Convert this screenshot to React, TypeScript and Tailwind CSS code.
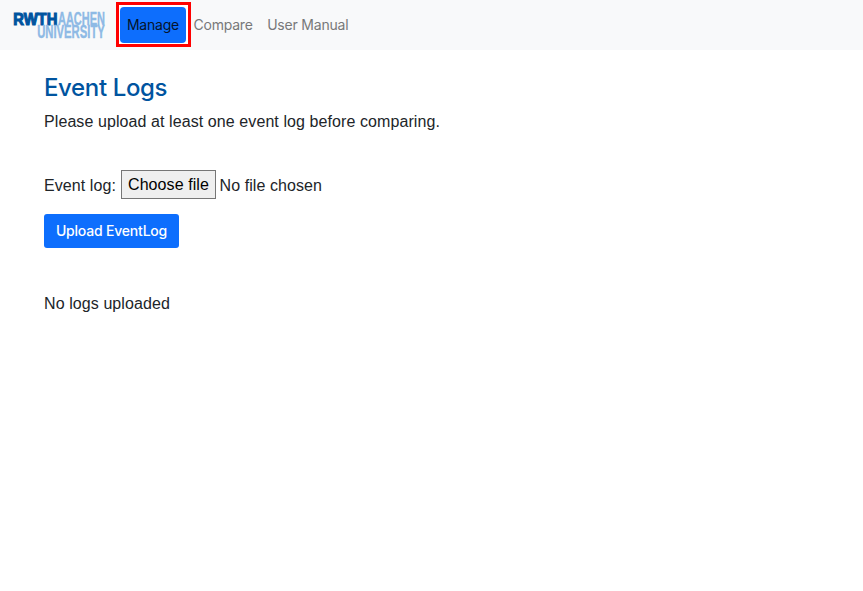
import React from "react";

function Logo() {
  return (
    <svg
      width="92"
      height="32"
      viewBox="0 -2 92 32"
      role="img"
      aria-label="RWTH Aachen University"
      className="block shrink-0 overflow-visible font-['Liberation_Sans',Arial,sans-serif] font-bold"
    >
      <text x="0.3" y="13.6" fontSize="17" fill="#00549f" stroke="#00549f" strokeWidth="1.2" textLength="44" lengthAdjust="spacingAndGlyphs">RWTH</text>
      <text x="45" y="14" fontSize="18" fill="#8ebae5" stroke="#8ebae5" strokeWidth="0.4" textLength="47" lengthAdjust="spacingAndGlyphs">AACHEN</text>
      <text x="24.2" y="27.3" fontSize="17.5" fill="#8ebae5" stroke="#8ebae5" strokeWidth="0.4" textLength="67.6" lengthAdjust="spacingAndGlyphs">UNIVERSITY</text>
    </svg>
  );
}

function Navigation() {
  return (
    <nav className="flex h-[50px] items-center bg-[#f8f9fa] pl-[13px] font-[Inter,sans-serif] text-sm text-[#777879]">
      <Logo />
      <div className="ml-[10.5px] mb-px border-[3px] border-[#ff0000] bg-white px-[1.5px] py-[1.5px]">
        <a className="flex h-9 w-[66px] items-center justify-center rounded bg-[#0d6efd] pt-px tracking-[-0.2px] text-[#06142b]">Manage</a>
      </div>
      <a className="ml-[3px] whitespace-nowrap tracking-[-0.22px]">Compare</a>
      <a className="ml-[14.5px] whitespace-nowrap tracking-[-0.2px]">User Manual</a>
    </nav>
  );
}

export default function App() {
  return (
    <div className="min-h-screen bg-white font-['Liberation_Sans',Arial,sans-serif] text-base leading-6 text-[#212529]">
      <Navigation />
      <main className="flex flex-col items-start px-11 pt-[23px]">
        <h1 className="font-[Inter,sans-serif] text-2xl font-medium leading-[30px] tracking-[-0.36px] text-[#00549f]">Event Logs</h1>
        <p className="mt-[7px] tracking-[0.085px]">Please upload at least one event log before comparing.</p>
        <div className="mt-[36px] flex h-[29px] items-center">
          <span className="w-[72px] pt-0.5 tracking-[0.085px]">Event log:</span>
          <button className="ml-[5px] h-[29px] w-[95px] border border-[#767676] bg-[#efefef] text-center leading-[26px] tracking-[0.085px] text-black">Choose file</button>
          <span className="ml-[3.5px] pt-0.5 tracking-[0.085px]">No file chosen</span>
        </div>
        <button className="mt-[15px] h-[34px] w-[135px] rounded-[3px] bg-[#0d6efd] text-center font-[Inter,sans-serif] text-sm font-medium tracking-[-0.2px] text-white">Upload EventLog</button>
        <p className="mt-11 tracking-[0.085px]">No logs uploaded</p>
      </main>
    </div>
  );
}
